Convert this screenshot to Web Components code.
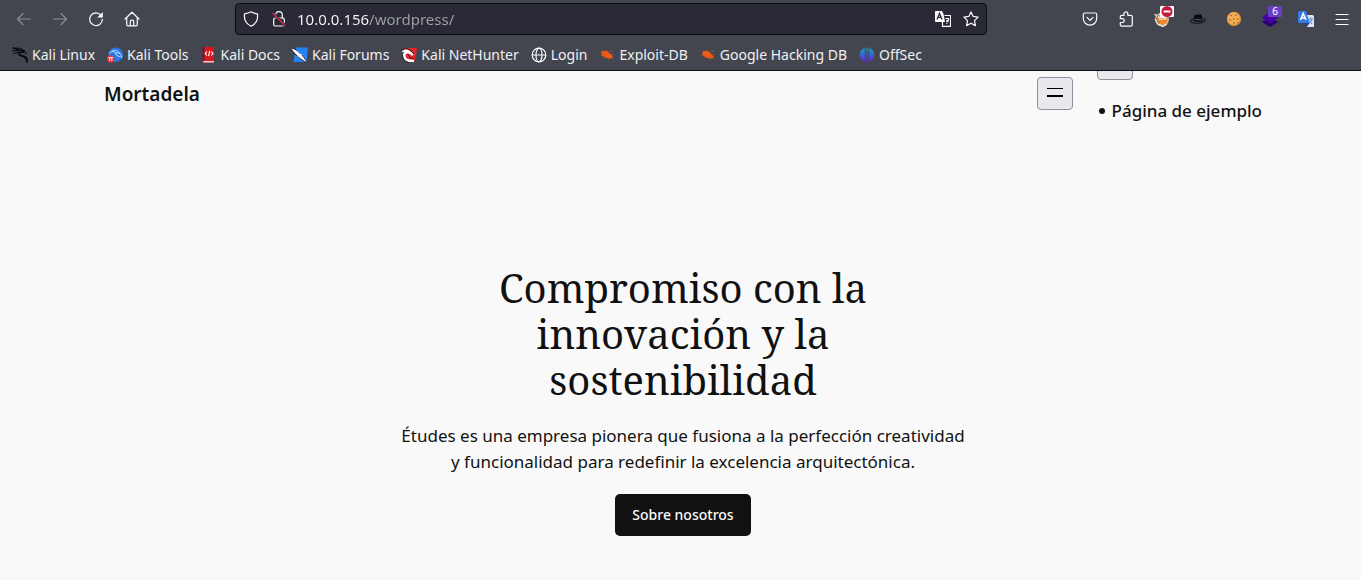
<!DOCTYPE html>
<html lang="es">
<head>
<meta charset="utf-8">
<meta name="viewport" content="width=device-width, initial-scale=1">
<title>Mortadela</title>
<style>
html,body{margin:0;min-height:100%;background:#f9f9f9}
body{font-family:"Noto Sans","Open Sans",sans-serif;color:#111}
</style>
</head>
<body>
<browser-toolbar></browser-toolbar>
<bookmarks-bar>
<bookmark-link icon="dragon">Kali Linux</bookmark-link>
<bookmark-link icon="tools">Kali Tools</bookmark-link>
<bookmark-link icon="docs">Kali Docs</bookmark-link>
<bookmark-link icon="forums">Kali Forums</bookmark-link>
<bookmark-link icon="nethunter">Kali NetHunter</bookmark-link>
<bookmark-link icon="globe">Login</bookmark-link>
<bookmark-link icon="bug">Exploit-DB</bookmark-link>
<bookmark-link icon="bug">Google Hacking DB</bookmark-link>
<bookmark-link icon="offsec">OffSec</bookmark-link>
</bookmarks-bar>
<site-page>
<site-header>Mortadela</site-header>
<site-hero>
<span slot="title">Compromiso con la innovación y la sostenibilidad</span>
<span slot="text">Études es una empresa pionera que fusiona a la perfección creatividad y funcionalidad para redefinir la excelencia arquitectónica.</span>
<span slot="action">Sobre nosotros</span>
</site-hero>
</site-page>
<script>
const stroke = 'fill="none" stroke="#fbfbfe" stroke-width="1.2" stroke-linecap="round" stroke-linejoin="round"';
const icons = {
  back: `<g ${stroke} opacity=".4"><path d="M14.5 8H1.5M7 2.500 1.500 8 7 13.500"/></g>`,
  forward: `<g ${stroke} opacity=".4"><path d="M1.500 8h13M9 2.500 14.500 8 9 13.500"/></g>`,
  reload: `<g ${stroke}><path d="M13 4.200A6.400 6.400 0 1 0 14.400 8.300"/></g><path d="M14.800 1v5.500H9.300z" fill="#fbfbfe"/>`,
  home: `<g ${stroke}><path d="M1 8 8 1.200 15 8M2.700 6.700V13.500q0 1.300 1.300 1.300h8q1.300 0 1.300-1.300V6.700M6.300 14.500V10.500q0-1.300 1.700-1.300t1.700 1.300v4"/></g>`,
  shield: `<path ${stroke} d="M8 .8C6 2 3.500 2.600 1.500 2.900 1.300 5.500 1.200 8 2.500 10.300 3.800 12.700 5.700 14.100 8 15.300c2.300-1.200 4.200-2.600 5.500-5C14.800 8 14.700 5.500 14.500 2.900 12.500 2.600 10 2 8 .800z"/>`,
  lock: `<g ${stroke}><path d="M4.700 7V4a3.300 3.300 0 0 1 6.600 0v3"/><rect x="2.700" y="7" width="10.600" height="8" rx="1.500"/></g><path d="M1.500 2 14.500 15" stroke="#292a35" stroke-width="3"/><path d="M1.500 2 14.500 15" stroke="#e22850" stroke-width="1.300"/>`,
  translate: `<path d="M1 0h6l1.500 3L10 11H1Q0 11 0 10V1q0-1 1-1z" fill="#fbfbfe"/><path d="m2 8.500 2.500-6 2.500 6M3 6.300h3" fill="none" stroke="#292a35" stroke-width="1.300"/><path d="M9.500 4.500h6v10.800H7.500V11" fill="none" stroke="#fbfbfe" stroke-width="1.200"/><path d="M10.500 7.500h3c.5 2-1 2.500-2.200 3.500M11.500 9l2 1.500M11.500 12.500h1" fill="none" stroke="#fbfbfe" stroke-width="1.200"/>`,
  star: `<path ${stroke} d="m8 .9 2.200 4.500 4.900.7-3.600 3.500.9 5L8 12.200l-4.400 2.400.9-5L.9 6.100l4.900-.7z"/>`,
  pocket: `<g ${stroke}><path d="M2.800 2h10.400q1.500 0 1.500 1.500v4a6.700 6.700 0 0 1-13.400 0v-4Q1.300 2 2.800 2z"/><path d="m5 6.300 3 3 3-3"/></g>`,
  puzzle: `<path ${stroke} d="M6 4.300V2.700a1.900 1.900 0 0 1 3.800 0v1.600h3q1.500 0 1.500 1.500v8q0 1.400-1.500 1.400H3.700q-1.400 0-1.400-1.400v-2.300H4.300a1.900 1.900 0 0 0 0-3.800H2.300V5.700q0-1.400 1.400-1.400z"/>`,
  fox: `<circle cx="8" cy="8.500" r="7" fill="#d9b392"/><path d="M3 5.500 14 6l-1.500 6L8 14l-4.500-3z" fill="#f28a2c"/><path d="M.500 3 5 6.500l8 .500M1 8l3 5 5 2.500 4-2.500" fill="none" stroke="#e9e5e2" stroke-width="1.300"/><path d="m5 11 3-3 4 2M4 4 2.500 8 5 13" fill="none" stroke="#956442" stroke-width=".9"/><path d="m5 9 5-1 2 1" fill="none" stroke="#fff" stroke-width=".8"/>`,
  hat: `<path d="M3.500 9.500C4 5 4.500 3 6 3.500q2 .700 4-.200 2-.800 2.500 6z" fill="#08090a"/><path d="M3.500 7.800Q.2 8.600.3 10.200q.4 2 7 2.100 7-.1 8.400-3.500-.9-1.600-3.200-.8" fill="#43464f" stroke="#08090a" stroke-width=".9"/><path d="M3.200 8.500q5 2 9.700 0v1.400q-5 1.800-9.700 0z" fill="#08090a"/>`,
  cookie: `<circle cx="8" cy="8" r="7.200" fill="#d58a35"/><circle cx="7.600" cy="7.500" r="6.300" fill="#f3ae55"/><g fill="#8f5022"><circle cx="5" cy="4.500" r=".8"/><circle cx="10" cy="4" r=".8"/><circle cx="8" cy="8" r=".8"/><circle cx="4" cy="9" r=".8"/><circle cx="12" cy="8" r=".8"/><circle cx="8" cy="12" r=".8"/><circle cx="11.500" cy="11.500" r=".7"/></g>`,
  layers: `<path d="m0 11 8-5 8 5-8 5z" fill="#26006e"/><path d="m0 6.500 8-6 8 6-8 6z" fill="#4a00a8"/>`,
  gtranslate: `<path d="M8 4h6.500q1.500 0 1.500 1.500V16H9z" fill="#dce4ee"/><path d="M10 8h5M12.500 6.500V8M14 8q-1 4-4 5M11 9l3 4" stroke="#568bd8" fill="none"/><path d="M0 1.500Q0 0 1.500 0H8l3.500 12H0z" fill="#367be4"/><path d="m2.500 9 2.700-6.500L8 9M3.500 7h3.500" fill="none" stroke="#fff" stroke-width="1.500"/><path d="M7 12h4.500L9 15.500z" fill="#173d90"/>`,
  menu: `<path d="M2 3.500h12M2 8.500h12M2 13.500h12" ${stroke}/>`,
  dragon: `<g fill="none" stroke="#060708"><path d="M.5 1.200q4-.5 6 2.200 3-.700 5.500 1.500l-4 .600q-2 .600-.300 2.500 2 1.100 4.700 1.500 3 .800 2.600 6" stroke-width="1.700"/><path d="M0 4q4-1 7 0M1 7q3-2 5.500-1M5 .8q5 .7 8 3.300M13 5.500 15 7M9 8.500q4.500 2 5.500 5" stroke-width=".9"/></g>`,
  tools: `<circle cx="8.700" cy="7.700" r="7.200" fill="#2878e8"/><path d="M2 6.500q3-3.500 7-.5 5-1 6 5M5 4q5-2 8 2.500M8.500 6q0 3 5 4" fill="none" stroke="#b9dcff" stroke-width="1"/><circle cx="3.700" cy="12" r="3.700" fill="#ec3038"/><path d="M1.500 10.500h4.500M2.700 10.500V14M4.800 10.500V14" stroke="#fff" stroke-width=".9"/>`,
  docs: `<path d="M1.500 1q0-1 1-1H13v16H2.500q-1 0-1-1z" fill="#db171d"/><path d="M1.500 1q0-1 1-1h.8v13.500H1.500z" fill="#352850"/><path d="M2.500 14H13v1.500H2.500z" fill="#d9d9dc"/><path d="M6 4.500 4.200 6.500 6 8.500M10.200 4.500 12 6.500l-1.800 2M8.800 4l-1.300 5" fill="none" stroke="#fff" stroke-width="1.100"/>`,
  forums: `<path d="M4 .5h12L14.500 15H1.500z" fill="#2482f4"/><path d="m0 1.500 4 1.500 4 4 2 .500 4.500 6.500-1 1-6.500-4-1-2-5-5z" fill="#fff"/><path d="m0 .5 5 3M0 4l5 5M6 10l8 5.500M10 8l5 7" fill="none" stroke="#151922" stroke-width=".8"/>`,
  nethunter: `<path d="M3 1h13l-2 13H5z" fill="#e7232e"/><path d="M.500 4.500Q5 .5 9 4l3.500 3-1 2-4-2.500Q4 6 4.500 9t4.500 3.500h4v2.500H8q-5-.5-6-5Q1 7 3.500 5.500z" fill="#fff"/><path d="M0 3.500Q5 0 9 3l4 4M1.500 7.500q0 6 6 8M7 8q3 4 6 4" fill="none" stroke="#191919" stroke-width=".9"/>`,
  globe: `<g ${stroke}><circle cx="8" cy="8" r="6.800"/><ellipse cx="8" cy="8" rx="3" ry="6.800"/><path d="M1.300 8h13.400"/></g>`,
  bug: `<path d="M2 5q4-2 6.500-.5l2.500 2 3 3.500-2 1.500-5-.5L3 8.500z" fill="#f05b13"/><path d="m0 9 4-2M3 3.500l3 2M8 3l1 2M11 5l3-1.500M12 7.500h3M13 10l2 2M9 11l1 2M5 10l-1 1.500" stroke="#b55c35" stroke-width=".6"/>`,
  offsec: `<defs><linearGradient id="tone" gradientUnits="userSpaceOnUse" x1="0" y1="0" x2="0" y2="16"><stop stop-color="#12a9b4"/><stop offset="1" stop-color="#651ce6"/></linearGradient></defs><g fill="url(#tone)"><path d="M5.800 1v13.500Q.7 12.500.7 7.500T5.800 1zM10.200 1v13.500q5.100-2 5.100-7T10.200 1z"/><path d="M6.700.5h.9v15h-.9zM8.400.5h.9v15h-.9z"/></g>`
};
const svg = name => `<svg viewBox="0 0 16 16" width="16" height="16" aria-hidden="true">${icons[name]}</svg>`;

function define(name, render) {
  customElements.define(name, class extends HTMLElement {
    constructor() {
      super();
      this.attachShadow({ mode: 'open' });
    }
    connectedCallback() {
      this.shadowRoot.innerHTML = render(this);
    }
  });
}

define('tool-button', el => `
<style>
:host{display:block;flex:none}
button{display:grid;place-items:center;position:relative;width:36px;height:32px;margin:0;padding:0;border:0;background:none}
:host([compact]) button{width:28px;height:28px}
svg{display:block}
::slotted(*){position:absolute;top:3px;right:6px}
</style>
<button type="button" aria-label="${el.getAttribute('label')}">${svg(el.getAttribute('icon'))}<slot></slot></button>`);

define('browser-toolbar', () => `
<style>
:host{display:flex;align-items:center;height:38px;padding:0 1px 0 6px;background:#43464f;box-sizing:border-box}
.group{display:flex;flex:none}
form{flex:1;min-width:0;display:flex;align-items:center;height:32px;margin:0 85px;padding:0 1px;border:1px solid #0b0c10;border-radius:4px;background:#292a35;box-sizing:border-box}
input{flex:1;min-width:0;height:28px;margin:0 0 0 4px;padding:0;border:0;outline:0;color:#fbfbfe;font:15px/28px "Noto Sans",sans-serif;background:linear-gradient(90deg,#fbfbfe 72px,#a0a1a9 72px);-webkit-background-clip:text;background-clip:text;-webkit-text-fill-color:transparent}
.count{width:14px;height:11px;border-radius:1px;background:#6b3fc4;color:#fff;font:10px/11px "Noto Sans",sans-serif;text-align:center}
.block{width:14px;height:11px;background:#fff;border-radius:1px}
.block svg{display:block}
</style>
<div class="group">
<tool-button icon="back" label="Atrás"></tool-button><tool-button icon="forward" label="Adelante"></tool-button><tool-button icon="reload" label="Recargar"></tool-button><tool-button icon="home" label="Inicio"></tool-button>
</div>
<form>
<tool-button compact icon="shield" label="Protección"></tool-button><tool-button compact icon="lock" label="Conexión no segura"></tool-button>
<input type="text" aria-label="Dirección" value="10.0.0.156/wordpress/">
<tool-button compact icon="translate" label="Traducir"></tool-button><tool-button compact icon="star" label="Marcador"></tool-button>
</form>
<div class="group">
<tool-button icon="pocket" label="Pocket"></tool-button><tool-button icon="puzzle" label="Extensiones"></tool-button>
<tool-button icon="fox" label="Proxy"><span class="block"><svg width="14" height="11"><circle cx="7" cy="5.500" r="5.500" fill="#c3193f"/><path d="M3.500 5.500h7" stroke="#fff" stroke-width="2"/></svg></span></tool-button>
<tool-button icon="hat" label="Sombrero"></tool-button><tool-button icon="cookie" label="Cookies"></tool-button>
<tool-button icon="layers" label="Tecnologías"><span class="count">6</span></tool-button>
<tool-button icon="gtranslate" label="Traductor"></tool-button><tool-button icon="menu" label="Menú"></tool-button>
</div>`);

define('bookmarks-bar', () => `
<style>
:host{display:block;background:#43464f;border-bottom:1px solid #0b0c10}
nav{display:flex;align-items:center;gap:12px;height:32px;padding:2px 12px 0;box-sizing:border-box;overflow:hidden}
</style>
<nav aria-label="Marcadores"><slot></slot></nav>`);

define('bookmark-link', el => `
<style>
:host{display:block;flex:none}
a{display:flex;align-items:center;gap:4px;color:#f0f0f4;font:14px/20px "Noto Sans",sans-serif;text-decoration:none;white-space:nowrap}
svg{display:block;flex:none}
</style>
<a href="#">${svg(el.getAttribute('icon'))}<span><slot></slot></span></a>`);

define('site-page', () => `
<style>
:host{display:block;overflow:hidden;padding-left:5px;background:#f9f9f9;color:#111}
</style>
<main><slot></slot></main>`);

define('menu-button', el => `
<style>
:host{display:block}
button{display:grid;place-items:center;width:36px;height:33px;padding:0;border:1px solid #8f8f9d;border-radius:4px;background:#e9e9ed;box-sizing:border-box}
svg{display:block}
</style>
<button type="button" aria-label="${el.getAttribute('label')}"><svg width="16" height="11"><path d="M0 0h16v1H0zM0 7h16v2H0z" fill="#000"/></svg></button>`);

define('site-header', () => `
<style>
:host{display:flex;align-items:flex-start;height:160px;padding:0 99px;box-sizing:border-box}
a{color:inherit;text-decoration:none}
.title{margin:9px auto 0 0;font-size:19px;font-weight:600;line-height:28px}
.toggle{margin:6px 24px 0 0}
nav{margin-top:-24px}
ul{margin:18px 0 0;padding:0 0 0 2px;list-style:none;font-size:17px;font-weight:500;line-height:26px}
li{display:flex;align-items:center;gap:7px}
li::before{content:"";width:6px;height:6px;border-radius:50%;background:#111}
</style>
<a class="title" href="#"><slot></slot></a>
<menu-button class="toggle" label="Abrir el menú"></menu-button>
<nav aria-label="Principal"><menu-button label="Cerrar el menú"></menu-button><ul><li><a href="#">Página de ejemplo</a></li></ul></nav>`);

define('site-hero', () => `
<style>
:host{display:flex;flex-direction:column;align-items:center;padding:34px 24px 44px;text-align:center}
h1{max-width:400px;margin:0;font:400 40px/46px "Noto Serif","Droid Serif","DejaVu Serif",serif}
p{max-width:570px;margin:20px 0 19px;font-size:17px;line-height:26px}
a{padding:10px 17px;border-radius:5px;background:#111;color:#f9f9f9;font-size:14px;font-weight:500;line-height:22px;text-decoration:none}
</style>
<h1><slot name="title"></slot></h1>
<p><slot name="text"></slot></p>
<a href="#"><slot name="action"></slot></a>`);
</script>
</body>
</html>
